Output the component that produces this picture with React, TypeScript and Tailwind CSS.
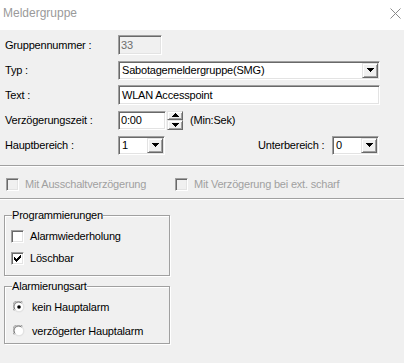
import React from "react";

const sunken =
  "border border-t-[#a0a0a0] border-l-[#a0a0a0] border-b-white border-r-white shadow-[inset_1px_1px_0_#696969,inset_-1px_-1px_0_#e3e3e3]";
const raised =
  "border border-t-[#e3e3e3] border-l-[#e3e3e3] border-b-[#696969] border-r-[#696969] shadow-[inset_1px_1px_0_#fff,inset_-1px_-1px_0_#a0a0a0] bg-[#f0f0f0]";

function DownTri() {
  return (
    <svg width="7" height="4" viewBox="0 0 7 4">
      <path d="M0 0h7L3.5 4z" fill="#000" shapeRendering="crispEdges" />
    </svg>
  );
}
function UpTri() {
  return (
    <svg width="7" height="4" viewBox="0 0 7 4">
      <path d="M0 4h7L3.5 0z" fill="#000" shapeRendering="crispEdges" />
    </svg>
  );
}

function Combo({ value, className }: { value: string; className: string }) {
  return (
    <div className={`${sunken} bg-white flex items-stretch p-px ${className}`}>
      <div className="flex-1 flex items-center pl-[2px] leading-none">{value}</div>
      <div className={`${raised} w-[16px] flex items-center justify-center`}>
        <DownTri />
      </div>
    </div>
  );
}

function CheckBox({ checked, disabled }: { checked?: boolean; disabled?: boolean }) {
  return (
    <div
      className={`w-[13px] h-[13px] shrink-0 ${sunken} ${disabled ? "bg-[#f0f0f0]" : "bg-white"} flex items-center justify-center`}
    >
      {checked && (
        <svg width="7" height="7" viewBox="0 0 7 7">
          <path
            d="M0 2h1v1h1v1h1V3h1V2h1V1h1V0h1v3H6v1H5v1H4v1H3v1H2V6H1V5H0z"
            fill="#000"
            shapeRendering="crispEdges"
          />
        </svg>
      )}
    </div>
  );
}

function Radio({ checked }: { checked?: boolean }) {
  return (
    <svg width="12" height="12" viewBox="0 0 12 12" className="shrink-0">
      <circle cx="6" cy="6" r="5.5" fill="#e3e3e3" />
      <path d="M1.2 9.6 A5.5 5.5 0 0 1 9.6 1.2" stroke="#a0a0a0" strokeWidth="1" fill="none" />
      <path d="M2.2 8.6 A4.3 4.3 0 0 1 8.6 2.2" stroke="#696969" strokeWidth="1" fill="none" />
      <circle cx="6" cy="6" r="4" fill="#fff" />
      {checked && <circle cx="6" cy="6" r="1.8" fill="#000" />}
    </svg>
  );
}

function Separator({ className }: { className: string }) {
  return <div className={`h-[2px] border-t border-t-[#a0a0a0] border-b border-b-white ${className}`} />;
}

export default function App() {
  return (
    <div className="w-[404px] h-[363px] bg-[#f0f0f0] overflow-hidden font-['Liberation_Sans',Arial,sans-serif] text-[11px] tracking-[-0.2px] text-black">
      {/* Title bar */}
      <div className="h-[30px] bg-white flex items-center justify-between pl-[3px] pr-[3px]">
        <span className="text-[12px] tracking-normal text-[#9a9a9a] pb-[4px]">Meldergruppe</span>
        <svg width="11" height="11" viewBox="0 0 11 11" className="mb-[4px]">
          <path d="M0.5 0.5L10.5 10.5M10.5 0.5L0.5 10.5" stroke="#8a8a8a" strokeWidth="1" />
        </svg>
      </div>

      {/* Form rows */}
      <div className="flex flex-col gap-[5px] pt-[5px]">
        <div className="flex items-center h-[20px]">
          <div className="w-[118px] pl-[5px]">Gruppennummer :</div>
          <div className={`${sunken} bg-[#f0f0f0] w-[44px] h-[20px] flex items-center pl-[2px] text-[#6d6d6d]`}>33</div>
        </div>
        <div className="flex items-center h-[20px]">
          <div className="w-[118px] pl-[5px]">Typ :</div>
          <Combo value="Sabotagemeldergruppe(SMG)" className="w-[262px] h-[19px]" />
        </div>
        <div className="flex items-center h-[20px]">
          <div className="w-[118px] pl-[5px]">Text :</div>
          <div className={`${sunken} bg-white w-[262px] h-[20px] flex items-center pl-[3px]`}>WLAN Accesspoint</div>
        </div>
        <div className="flex items-center h-[20px]">
          <div className="w-[118px] pl-[5px]">Verzögerungszeit :</div>
          <div className={`${sunken} bg-white w-[48px] h-[19px] flex items-center pl-[2px]`}>0:00</div>
          <div className="ml-px w-[16px] h-[19px] flex flex-col">
            <div className={`${raised} flex-1 flex items-center justify-center`}>
              <UpTri />
            </div>
            <div className={`${raised} flex-1 flex items-center justify-center`}>
              <DownTri />
            </div>
          </div>
          <div className="ml-[7px]">(Min:Sek)</div>
        </div>
        <div className="flex items-center h-[20px]">
          <div className="w-[118px] pl-[5px]">Hauptbereich :</div>
          <Combo value="1" className="w-[47px] h-[19px]" />
          <div className="ml-[93px] w-[74px]">Unterbereich :</div>
          <Combo value="0" className="w-[47px] h-[19px]" />
        </div>
      </div>

      <Separator className="mt-[10px]" />

      <div className="flex items-center mt-[11px] h-[13px] text-[#a0a0a0]">
        <div className="pl-[6px] flex items-center w-[175px]">
          <CheckBox disabled />
          <span className="ml-[6px]">Mit Ausschaltverzögerung</span>
        </div>
        <div className="flex items-center">
          <CheckBox disabled />
          <span className="ml-[6px]">Mit Verzögerung bei ext. scharf</span>
        </div>
      </div>

      <Separator className="mt-[7px]" />

      {/* Group 1 */}
      <div className="relative ml-[4px] mt-[15px] w-[166px] h-[61px] border border-[#a0a0a0] shadow-[1px_1px_0_#fff,inset_1px_1px_0_#fff] pt-[14px] pl-[6px] flex flex-col gap-[9px]">
        <span className="absolute left-[7px] top-[-8px] bg-[#f0f0f0] leading-[14px]">Programmierungen</span>
        <div className="flex items-center h-[13px]">
          <CheckBox />
          <span className="ml-[6px]">Alarmwiederholung</span>
        </div>
        <div className="flex items-center h-[13px]">
          <CheckBox checked />
          <span className="ml-[6px]">Löschbar</span>
        </div>
      </div>

      {/* Group 2 */}
      <div className="relative ml-[4px] mt-[10px] w-[166px] h-[58px] border border-[#a0a0a0] shadow-[1px_1px_0_#fff,inset_1px_1px_0_#fff] pt-[14px] pl-[8px] flex flex-col gap-[12px]">
        <span className="absolute left-[7px] top-[-8px] bg-[#f0f0f0] leading-[14px]">Alarmierungsart</span>
        <div className="flex items-center h-[12px]">
          <Radio checked />
          <span className="ml-[7px]">kein Hauptalarm</span>
        </div>
        <div className="flex items-center h-[12px]">
          <Radio />
          <span className="ml-[7px]">verzögerter Hauptalarm</span>
        </div>
      </div>
    </div>
  );
}
